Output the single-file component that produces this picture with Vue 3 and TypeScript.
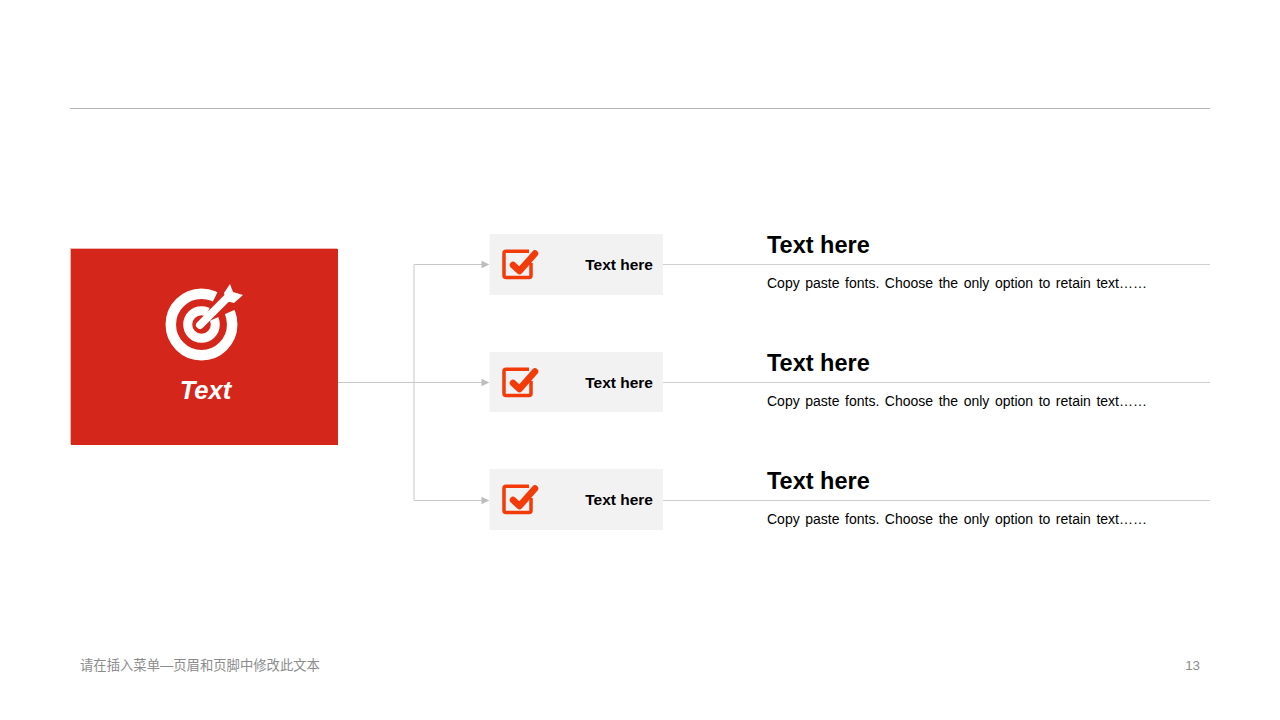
<script setup lang="ts">
const rows: number[] = [1, 2, 3]
</script>

<template>
  <div class="slide">
    <div class="rule"></div>
    <main class="diagram">
      <section class="card">
        <svg class="target" width="84" height="84" viewBox="0 0 84 84" fill="none">
          <circle cx="39.500" cy="42.500" r="30.700" stroke="#fff" stroke-width="10.500" />
          <circle cx="39.500" cy="42.500" r="13.800" stroke="#fff" stroke-width="9" />
          <path d="M39.500 42.500 L88 21 L63 -5 Z" fill="#d5261b" />
          <path d="M38 43 L66 15" stroke="#fff" stroke-width="8" stroke-linecap="round" />
          <path d="M68 2 L71 10 L81 13 L72 21 L64 19 L62 11 Z" fill="#fff" />
        </svg>
        <div class="card-label">Text</div>
      </section>
      <svg class="links" width="152" height="296" viewBox="0 0 152 296" fill="none">
        <path d="M0 148.500 H144 M76 148.500 V30.500 H144 M76 148.500 V266.500 H144" stroke="#c8c8c8" stroke-width="1" />
        <path d="M143.500 26.700 L151.300 30.500 L143.500 34.300 Z M143.500 144.700 L151.300 148.500 L143.500 152.300 Z M143.500 262.700 L151.300 266.500 L143.500 270.300 Z" fill="#bdbdbd" />
      </svg>
      <div class="rows">
        <article v-for="row in rows" :key="row" class="row">
          <div class="tag">
            <svg width="38" height="34" viewBox="0 0 38 34" fill="none">
              <path d="M28 4.200 H5 a2 2 0 0 0 -2 2 V28.400 a2 2 0 0 0 2 2 H28 a2 2 0 0 0 2 -2 V16" stroke="#f33b0a" stroke-width="3.500" />
              <path d="M12 18 L18.500 24 L34 6.500" stroke="#f33b0a" stroke-width="6.500" stroke-linecap="round" stroke-linejoin="round" />
            </svg>
            <span class="tag-text">Text here</span>
          </div>
          <div class="detail">
            <h2 class="title">Text here</h2>
            <div class="line"></div>
            <p class="desc">Copy paste fonts. Choose the only option to retain text……</p>
          </div>
        </article>
      </div>
    </main>
    <footer class="footer">
      <span>请在插入菜单—页眉和页脚中修改此文本</span>
      <span>13</span>
    </footer>
  </div>
</template>

<style scoped>
.slide {
  width: 1280px;
  height: 720px;
  box-sizing: border-box;
  padding: 108px 70px 0;
  background: #fff;
  font-family: "Liberation Sans", "Noto Sans CJK SC", sans-serif;
  display: flex;
  flex-direction: column;
  overflow: hidden;
}
.rule {
  height: 1px;
  background: #b4b4b4;
}
.diagram {
  display: flex;
  align-items: flex-start;
  margin-top: 125px;
  height: 296px;
}
.card {
  width: 267px;
  height: 196px;
  margin: 15px 0 0 1px;
  background: #d5261b;
  box-shadow: -1px -1px 0 #f0b5b0;
  color: #fff;
  display: flex;
  flex-direction: column;
  align-items: center;
}
.target {
  margin: 33px 0 0 -1px;
}
.card-label {
  margin: 9px 0 0 2px;
  font-size: 25.600px;
  line-height: 30px;
  font-weight: 700;
  font-style: italic;
}
.links {
  flex: none;
}
.rows {
  flex: 1;
  display: flex;
  flex-direction: column;
  gap: 57px;
}
.row {
  display: flex;
  height: 60.600px;
}
.tag {
  width: 173px;
  height: 100%;
  background: #f2f2f2;
  box-shadow: -1px 0 0 #f9f9f9;
  display: flex;
  align-items: center;
  justify-content: space-between;
  box-sizing: border-box;
  padding: 0 10px 0 11px;
}
.tag-text {
  margin-top: 1.500px;
  font-size: 15.500px;
  font-weight: 700;
  color: #000;
}
.detail {
  flex: 1;
  display: flex;
  flex-direction: column;
}
.title {
  margin: 0;
  box-sizing: border-box;
  padding: 0.400px 0 0 104px;
  height: 30.400px;
  font-size: 23.500px;
  line-height: 22px;
  font-weight: 700;
  color: #000;
}
.line {
  height: 1px;
  background: #cfcfcf;
}
.desc {
  margin: 9px 0 0;
  padding-left: 104px;
  font-size: 14px;
  line-height: 18px;
  word-spacing: 1.670px;
  color: #000;
}
.footer {
  margin-top: 127px;
  padding: 0 10px;
  display: flex;
  justify-content: space-between;
  font-size: 13.330px;
  line-height: 18px;
  color: #8c8c8c;
}
</style>
